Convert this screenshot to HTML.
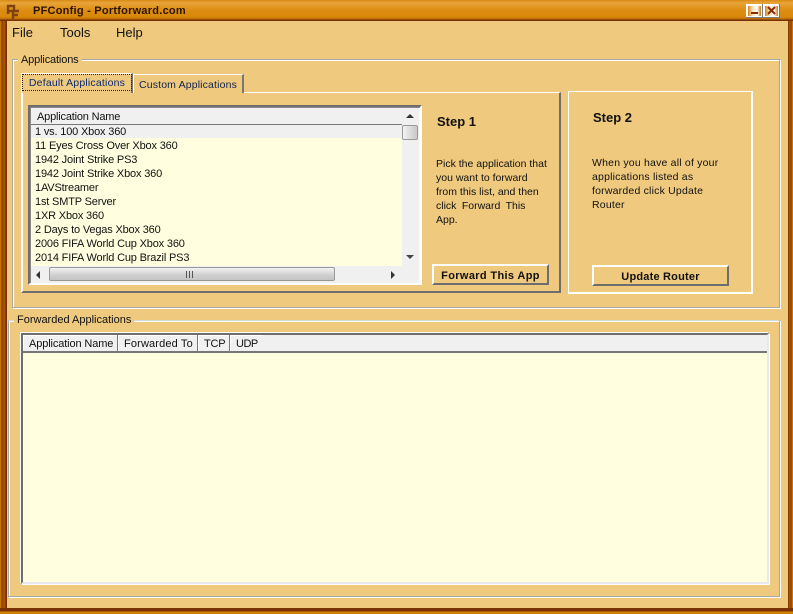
<!DOCTYPE html>
<html><head><meta charset="utf-8"><style>
html,body{margin:0;padding:0}
body{width:793px;height:614px;overflow:hidden;position:relative;background:#efca7e;font-family:"Liberation Sans",sans-serif;color:#111;font-size:11px}
div{position:absolute;box-sizing:border-box;white-space:nowrap}
.g{border:1px solid #a8a8a8;box-shadow:inset 1px 1px 0 #fff,1px 1px 0 #fff}
.lab{background:#efca7e;padding:0 3px;font-size:11px;line-height:13px}
.row{height:14px;line-height:14px;font-size:11px;color:#111;left:5px;letter-spacing:-.17px}
.btn{background:#efca7e;border:2px solid;border-color:#fff #6e6e6e #6e6e6e #fff;font-weight:bold;font-size:11px;text-align:center;letter-spacing:.35px}
.hd{background:#f0f0f0;border-right:1px solid #777;top:0;height:16px;line-height:18px;font-size:11px;padding-left:6px;box-shadow:inset 1px 1px 0 #fff}
.t{font-size:10.5px;line-height:14px}
.sb{background:#f0f0f0}
</style></head><body>
<!-- title bar -->
<div style="left:0;top:0;width:793px;height:21px;background:linear-gradient(#d98c14 0,#e8a53c 3px,#e39a26 6px,#dc8c10 11px,#d98808 17px,#b86a08 19px,#7a3200 20px)"></div>
<svg style="position:absolute;left:0;top:0" width="24" height="21" viewBox="0 0 24 21" fill="none" stroke="#7f4312" stroke-width="2.4"><path d="M8 14V6h6v5H8"/><path d="M13 19v-8h6M13 15h5"/></svg>
<div style="left:33px;top:4px;font-weight:bold;font-size:11px;line-height:14px;color:#2a1400;letter-spacing:.24px">PFConfig - Portforward.com</div>
<!-- window buttons -->
<div style="left:746px;top:4px;width:17px;height:14px;background:#fff;border-right:1px solid #777;border-bottom:1px solid #777"></div>
<div style="left:748px;top:6px;width:13px;height:10px;background:linear-gradient(90deg,#d9821c,#f7e2bc 35%,#fff 70%,#c87818)"></div>
<div style="left:751px;top:12px;width:7px;height:2px;background:#8a2c00"></div>
<div style="left:763px;top:4px;width:17px;height:14px;background:#fff;border-right:1px solid #777;border-bottom:1px solid #777"></div>
<div style="left:765px;top:6px;width:13px;height:10px;background:linear-gradient(90deg,#d9821c,#f7e2bc 35%,#fff 70%,#c87818)"></div>
<svg style="position:absolute;left:767px;top:6px" width="9" height="9" viewBox="0 0 9 9" stroke="#8a2c00" stroke-width="2"><path d="M1 1l7 7M8 1l-7 7"/></svg>
<!-- window borders -->
<div style="left:0;top:21px;width:7px;height:593px;background:linear-gradient(90deg,#d98808 0,#8a3c00 2px,#b05a08 4px,#7a3200 6px)"></div>
<div style="left:788px;top:21px;width:5px;height:593px;background:linear-gradient(90deg,#7a3200 0,#b05a08 2px,#8a3c00 3px,#d98808 5px)"></div>
<div style="left:0;top:608px;width:793px;height:6px;background:linear-gradient(#7a3200 0,#7a3200 3px,#d98808 4px,#c87808 6px)"></div>
<!-- menu -->
<div style="left:12px;top:25px;font-size:13px;line-height:15px">File</div>
<div style="left:60px;top:25px;font-size:13px;line-height:15px">Tools</div>
<div style="left:116px;top:25px;font-size:13px;line-height:15px">Help</div>
<!-- Applications group -->
<div class="g" style="left:12px;top:59px;width:768px;height:249px"></div>
<div class="lab" style="left:18px;top:54px;letter-spacing:-.15px">Applications</div>
<!-- tab page -->
<div style="left:21px;top:92px;width:540px;height:201px;border:2px solid;border-color:#fff #6e6e6e #6e6e6e #fff;border-top-width:1px"></div>
<!-- tabs -->
<div style="left:133px;top:74px;width:111px;height:19px;background:#efca7e;border:1px solid;border-width:1px 2px 0 1px;border-color:#fff #777 #fff #fff;text-align:center;line-height:20px;font-size:10.5px;color:#10204a;letter-spacing:.15px">Custom Applications</div>
<div style="left:21px;top:73px;width:112px;height:20px;background:#efca7e;border:1px solid;border-width:1px 2px 0 1px;border-color:#fff #777 #fff #fff"></div>
<div style="left:22px;top:74px;width:110px;height:17px;border:1px dotted #222;text-align:center;line-height:17px;font-size:10.5px;color:#0a2a70;letter-spacing:.2px">Default Applications</div>
<!-- list -->
<div style="left:28px;top:105px;width:394px;height:180px;background:#ffffe0;border:2px solid;border-color:#6e6e6e #fff #fff #6e6e6e;overflow:hidden">
  <div style="left:0;top:0;right:0;height:100%;border:1px solid #8a8a8a;border-right:0;border-bottom:0"></div>
  <div style="left:1px;top:1px;width:372px;height:17px;background:#f0f0f0;border-bottom:1px solid #777;padding-left:6px;font-size:11px;line-height:18px;letter-spacing:-.19px">Application Name</div>
  <div style="left:1px;top:18px;width:372px;height:13px;background:#f0f0f0"></div>
  <div class="row" style="top:18px">1 vs. 100 Xbox 360</div>
  <div class="row" style="top:32px">11 Eyes Cross Over Xbox 360</div>
  <div class="row" style="top:46px">1942 Joint Strike PS3</div>
  <div class="row" style="top:60px">1942 Joint Strike Xbox 360</div>
  <div class="row" style="top:74px">1AVStreamer</div>
  <div class="row" style="top:88px">1st SMTP Server</div>
  <div class="row" style="top:102px">1XR Xbox 360</div>
  <div class="row" style="top:116px">2 Days to Vegas Xbox 360</div>
  <div class="row" style="top:130px">2006 FIFA World Cup Xbox 360</div>
  <div class="row" style="top:144px">2014 FIFA World Cup Brazil PS3</div>
  <!-- v scroll -->
  <div class="sb" style="left:372px;top:1px;width:17px;height:158px"></div>
  <div style="left:376px;top:7px;width:0;height:0;border:4px solid transparent;border-top:0;border-bottom:4px solid #333"></div>
  <div style="left:372px;top:18px;width:16px;height:15px;background:linear-gradient(90deg,#f2f2f2,#c8c8c8);border:1px solid #999;border-radius:2px"></div>
  <div style="left:376px;top:148px;width:0;height:0;border:4px solid transparent;border-bottom:0;border-top:4px solid #444"></div>
  <!-- h scroll -->
  <div class="sb" style="left:1px;top:159px;width:388px;height:17px"></div>
  <div style="left:6px;top:164px;width:0;height:0;border:4px solid transparent;border-left:0;border-right:4px solid #333"></div>
  <div style="left:19px;top:160px;width:286px;height:14px;background:linear-gradient(#f2f2f2,#cfcfcf 60%,#c4c4c4);border:1px solid #999;border-radius:2px"></div>
  <div style="left:156px;top:164px;width:7px;height:7px;background:repeating-linear-gradient(90deg,#555 0,#555 1px,transparent 1px,transparent 3px)"></div>
  <div style="left:361px;top:164px;width:0;height:0;border:4px solid transparent;border-right:0;border-left:4px solid #333"></div>
</div>
<!-- step 1 -->
<div style="left:437px;top:114px;font-weight:bold;font-size:13px;line-height:15px">Step 1</div>
<div class="t" style="left:436px;top:157px">Pick the application that<br>you want to forward<br>from this list, and then<br><span style="word-spacing:2.5px">click Forward This</span><br>App.</div>
<div class="btn" style="left:432px;top:264px;width:117px;height:21px;line-height:20px">Forward This App</div>
<!-- step 2 -->
<div style="left:568px;top:91px;width:185px;height:203px;border:1px solid #fff"></div>
<div style="left:569px;top:92px;width:183px;height:201px;border:1px solid;border-color:#efca7e #fff #fff #efca7e"></div>
<div style="left:593px;top:110px;font-weight:bold;font-size:13px;line-height:15px">Step 2</div>
<div class="t" style="left:592px;top:156px;letter-spacing:.2px">When you have all of your<br>applications listed as<br>forwarded click Update<br>Router</div>
<div class="btn" style="left:592px;top:265px;width:137px;height:21px;line-height:20px;letter-spacing:.2px">Update Router</div>
<!-- Forwarded group -->
<div class="g" style="left:8px;top:320px;width:772px;height:277px;border-top-color:#d8d8d8"></div>
<div class="lab" style="left:14px;top:314px">Forwarded Applications</div>
<!-- forwarded list -->
<div style="left:21px;top:333px;width:748px;height:251px;background:#ffffe0;border:2px solid;border-color:#6e6e6e #e8e8f0 #e8e8f0 #6e6e6e;box-shadow:-1px -1px 0 #fff,1px 1px 0 #fff">
  <div style="left:0;top:0;width:744px;height:18px;background:#f0f0f0;border-bottom:2px solid #777"></div>
  <div class="hd" style="left:0;width:95px;letter-spacing:-.12px">Application Name</div>
  <div class="hd" style="left:95px;width:80px;letter-spacing:.15px">Forwarded To</div>
  <div class="hd" style="left:175px;width:32px;letter-spacing:-.2px">TCP</div>
  <div class="hd" style="left:207px;width:33px;border-right:0;letter-spacing:-.5px">UDP</div>
</div>
</body></html>
